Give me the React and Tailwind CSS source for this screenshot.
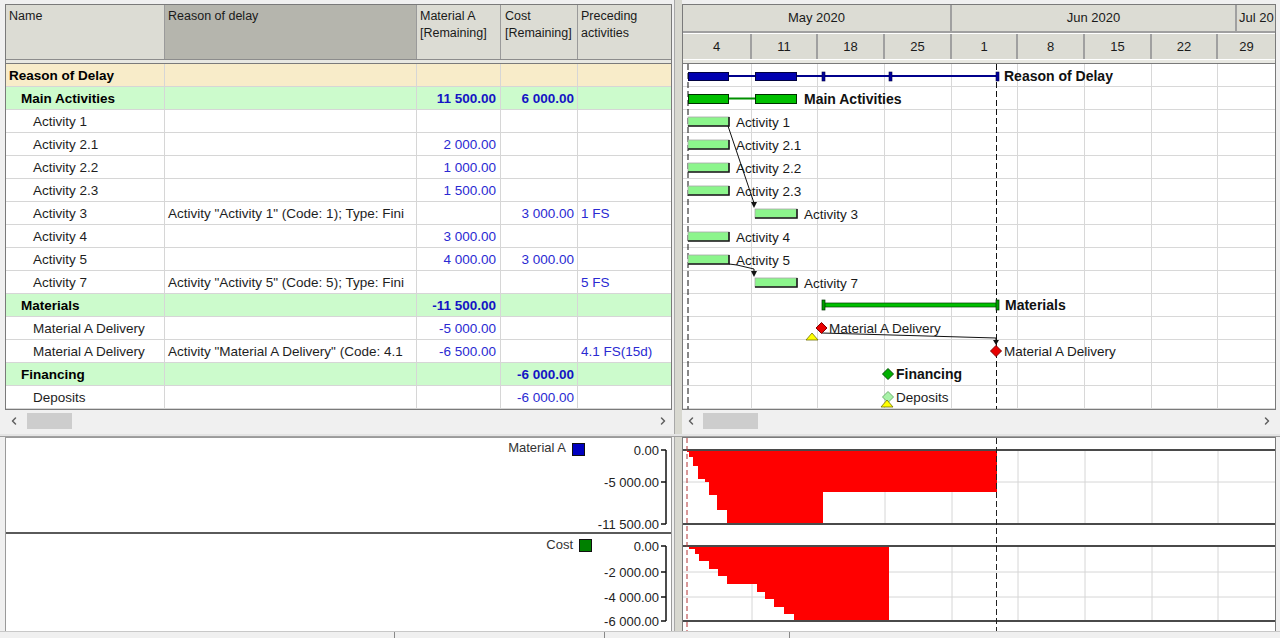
import React from 'react';
import { ChevronLeft, ChevronRight } from 'lucide-react';

const rows = [
  { name: 'Reason of Delay', kind: 'root' },
  { name: 'Main Activities', kind: 'group', mat: '11 500.00', cost: '6 000.00' },
  { name: 'Activity 1' },
  { name: 'Activity 2.1', mat: '2 000.00' },
  { name: 'Activity 2.2', mat: '1 000.00' },
  { name: 'Activity 2.3', mat: '1 500.00' },
  { name: 'Activity 3', reason: 'Activity "Activity 1" (Code: 1); Type: Fini', cost: '3 000.00', pred: '1 FS' },
  { name: 'Activity 4', mat: '3 000.00' },
  { name: 'Activity 5', mat: '4 000.00', cost: '3 000.00' },
  { name: 'Activity 7', reason: 'Activity "Activity 5" (Code: 5); Type: Fini', pred: '5 FS' },
  { name: 'Materials', kind: 'group', mat: '-11 500.00' },
  { name: 'Material A Delivery', mat: '-5 000.00' },
  { name: 'Material A Delivery', reason: 'Activity "Material A Delivery" (Code: 4.1', mat: '-6 500.00', pred: '4.1 FS(15d)' },
  { name: 'Financing', kind: 'group', cost: '-6 000.00' },
  { name: 'Deposits', cost: '-6 000.00' },
];

const days = ['4', '11', '18', '25', '1', '8', '15', '22', '29'];
const dayW = ['w-[69px]', 'w-[66px]', 'w-[67px]', 'w-[67px]', 'w-[66px]', 'w-[67px]', 'w-[67px]', 'w-[66px]', 'flex-1'];

// gantt bars, absolute page coords (svg viewBox matches)
const taskBars = [
  { x: 688, row: 2, label: 'Activity 1' },
  { x: 688, row: 3, label: 'Activity 2.1' },
  { x: 688, row: 4, label: 'Activity 2.2' },
  { x: 688, row: 5, label: 'Activity 2.3' },
  { x: 755, row: 6, label: 'Activity 3' },
  { x: 688, row: 7, label: 'Activity 4' },
  { x: 688, row: 8, label: 'Activity 5' },
  { x: 755, row: 9, label: 'Activity 7' },
];
const top = (i) => 64 + i * 23;

function Diamond({ cx, cy, fill, stroke }) {
  const r = 5.5;
  return <polygon points={`${cx},${cy - r} ${cx + r},${cy} ${cx},${cy + r} ${cx - r},${cy}`} fill={fill} stroke={stroke} strokeWidth="1" />;
}

function Scrollbar({ thumb }) {
  return (
    <div className="h-[22px] bg-[#f0f0f0] flex items-center relative">
      <ChevronLeft className="w-[12px] h-[12px] text-[#606060] ml-[3px]" strokeWidth={3} />
      <div className={thumb} />
      <ChevronRight className="w-[12px] h-[12px] text-[#606060] ml-auto mr-[3px]" strokeWidth={3} />
    </div>
  );
}

function LeftGrid() {
  return (
    <div className="w-[674px] shrink-0 pl-[5px] pr-[2px] pt-[4px] flex flex-col">
      <div className="border-l border-r border-t border-b border-[#7a7a7a] bg-white flex flex-col">
        <div className="flex h-[55px] bg-[#dcdcd4] border-b border-[#8c8c8c] text-[12.5px] leading-[17px] text-[#1a1a1a]">
          <div className="w-[159px] border-r border-[#9a9a9a] pl-[3px] pt-[3px]">Name</div>
          <div className="w-[252px] border-r border-[#9a9a9a] bg-[#b5b5ad] pl-[3px] pt-[3px]">Reason of delay</div>
          <div className="w-[84px] border-r border-[#9a9a9a] pl-[3px] pt-[3px]">Material A<br />[Remaining]</div>
          <div className="w-[77px] border-r border-[#9a9a9a] pl-[4px] pt-[3px]">Cost<br />[Remaining]</div>
          <div className="flex-1 pl-[3px] pt-[3px]">Preceding<br />activities</div>
        </div>
        <div className="h-[4px] bg-[#e8e8e2] border-b border-[#7a7a7a]" />
        {rows.map((r, i) => {
          const bg = r.kind === 'root' ? 'bg-[#f8ecc9]' : r.kind === 'group' ? 'bg-[#ccfbcc]' : 'bg-white';
          const bold = r.kind ? 'font-bold text-black' : 'text-[#1e1e1e]';
          const pad = r.kind === 'root' ? 'pl-[3px]' : r.kind === 'group' ? 'pl-[15px]' : 'pl-[27px]';
          const num = r.kind ? 'font-bold text-[#1414c4]' : 'text-[#2a2ad2]';
          return (
            <div key={i} className={`flex h-[23px] pt-[2px] border-b border-[#d6d6d6] text-[13.5px] ${bg}`}>
              <div className={`w-[159px] -mt-[2px] pt-[2px] border-r border-[#d6d6d6] flex items-center whitespace-nowrap overflow-hidden ${pad} ${bold}`}>{r.name}</div>
              <div className="w-[252px] -mt-[2px] pt-[2px] border-r border-[#d6d6d6] flex items-center pl-[3px] whitespace-nowrap overflow-hidden text-[#1e1e1e]">{r.reason}</div>
              <div className={`w-[84px] -mt-[2px] pt-[2px] border-r border-[#d6d6d6] flex items-center justify-end pr-[4px] ${num}`}>{r.mat}</div>
              <div className={`w-[77px] -mt-[2px] pt-[2px] border-r border-[#d6d6d6] flex items-center justify-end pr-[3px] ${num}`}>{r.cost}</div>
              <div className="flex-1 -mt-[2px] pt-[2px] flex items-center pl-[3px] text-[#2a2ad2] whitespace-nowrap overflow-hidden">{r.pred}</div>
            </div>
          );
        })}
      </div>
      <Scrollbar thumb="ml-[7px] w-[45px] h-[16px] bg-[#cdcdcd]" />
    </div>
  );
}

function Splitter() {
  return <div className="w-[8px] shrink-0 bg-[#d8d8d0] border-l border-[#a8a8a8]" />;
}

function GanttOverlay() {
  return (
    <svg className="absolute inset-0" width="592" height="345" viewBox="683 64 592 345">
      {/* project start / status lines */}
      <line x1="688" y1="64" x2="688" y2="409" stroke="#111" strokeDasharray="6 3" />
      <line x1="996.5" y1="64" x2="996.5" y2="409" stroke="#111" strokeDasharray="6 3" />

      {/* Reason of Delay summary */}
      <rect x="688" y="75" width="310" height="2" fill="#00008c" />
      <rect x="688.5" y="72.5" width="40" height="8" fill="#0000b0" stroke="#000040" />
      <rect x="755.5" y="72.5" width="41" height="8" fill="#0000b0" stroke="#000040" />
      <rect x="822" y="72" width="3" height="9" fill="#0000a0" stroke="#000040" strokeWidth="0.6" />
      <rect x="889" y="72" width="3" height="9" fill="#0000a0" stroke="#000040" strokeWidth="0.6" />
      <rect x="996" y="72" width="3" height="9" fill="#0000a0" stroke="#000040" strokeWidth="0.6" />
      <text x="1004" y="81" fontSize="14" fontWeight="bold" fill="#111">Reason of Delay</text>

      {/* Main Activities */}
      <rect x="729" y="97.5" width="26" height="2" fill="#009000" />
      <rect x="688.5" y="94.5" width="40" height="9" fill="#00c000" stroke="#003000" />
      <rect x="755.5" y="94.5" width="41" height="9" fill="#00c000" stroke="#003000" />
      <text x="804" y="104" fontSize="14" fontWeight="bold" fill="#111">Main Activities</text>

      {taskBars.map((b) => {
        const y = top(b.row) + 7;
        const w = b.x === 688 ? 41 : 42;
        return (
          <g key={b.row}>
            <rect x={b.x} y={y} width={w} height="9" fill="#8cf58c" stroke="#a8a8a8" strokeWidth="0.8" />
            <polyline points={`${b.x},${y + 9} ${b.x + w},${y + 9} ${b.x + w},${y}`} fill="none" stroke="#1a1a1a" strokeWidth="1.6" />
            <text x={b.x + w + 7} y={top(b.row) + 17} fontSize="13.5" fill="#1a1a1a">{b.label}</text>
          </g>
        );
      })}

      {/* dependencies */}
      <line x1="728" y1="126" x2="754" y2="203" stroke="#111" strokeWidth="1" />
      <polygon points="751,202 757,202 754,208" fill="#111" />
      <polyline points="729,264 737,265 754,269 754,272" fill="none" stroke="#111" strokeWidth="1" />
      <polygon points="751,271 757,271 754,277" fill="#111" />

      {/* Materials */}
      <rect x="823" y="303" width="175" height="4" fill="#00c000" stroke="#004000" strokeWidth="0.7" />
      <rect x="822" y="300" width="3" height="10" fill="#00a000" stroke="#003000" strokeWidth="0.7" />
      <rect x="996" y="300" width="3" height="10" fill="#00a000" stroke="#003000" strokeWidth="0.7" />
      <text x="1005" y="310" fontSize="14" fontWeight="bold" fill="#111">Materials</text>

      <polyline points="822,333 996,338 996,341" fill="none" stroke="#111" strokeWidth="1" />
      <polygon points="993,340 999,340 996,345" fill="#111" />
      <polygon points="806,340 818,340 812,333" fill="#ffff00" stroke="#707000" strokeWidth="0.8" />
      <Diamond cx={821.5} cy={328} fill="#e80000" stroke="#800000" />
      <text x="829" y="333" fontSize="13.5" fill="#1a1a1a">Material A Delivery</text>

      <Diamond cx={996} cy={351} fill="#e80000" stroke="#800000" />
      <text x="1004" y="356" fontSize="13.5" fill="#1a1a1a">Material A Delivery</text>

      <Diamond cx={888} cy={374} fill="#00b000" stroke="#005000" />
      <text x="896" y="379" fontSize="14" fontWeight="bold" fill="#111">Financing</text>

      <Diamond cx={888} cy={397} fill="#a8f2a8" stroke="#70b070" />
      <polygon points="881,407 893,407 887,400" fill="#ffff00" stroke="#707000" strokeWidth="0.8" />
      <text x="896" y="402" fontSize="13.5" fill="#1a1a1a">Deposits</text>
    </svg>
  );
}

function GanttPane() {
  return (
    <div className="flex-1 min-w-0 pr-[4px] pt-[4px] flex flex-col">
      <div className="border-l border-t border-r border-b border-[#7a7a7a] bg-white flex flex-col">
        <div className="flex h-[28px] bg-[#dcdcd4] border-b-2 border-[#a0a0a0] text-[13px] text-[#1a1a1a]">
          <div className="w-[269px] border-r-2 border-[#a0a0a0] flex items-center justify-center">May 2020</div>
          <div className="w-[285px] border-r-2 border-[#a0a0a0] flex items-center justify-center">Jun 2020</div>
          <div className="flex-1 flex items-center pl-[2px] whitespace-nowrap overflow-hidden">Jul 20</div>
        </div>
        <div className="flex h-[27px] bg-[#dcdcd4] border-t border-white border-b border-[#8c8c8c] text-[13px] text-[#1a1a1a]">
          {days.map((d, i) => (
            <div key={i} className={`${dayW[i]} ${i < 8 ? 'border-r-2 border-[#a0a0a0]' : ''} flex items-center justify-center`}>{d}</div>
          ))}
        </div>
        <div className="h-[4px] bg-[#e8e8e2] border-b border-[#7a7a7a]" />
        <div className="relative">
          {rows.map((r, i) => (
            <div key={i} className="flex h-[23px] border-b border-[#d8d8d8]">
              {dayW.map((w, j) => (
                <div key={j} className={`${w} ${j < 8 ? 'border-r border-[#d8d8d8]' : ''}`} />
              ))}
            </div>
          ))}
          <GanttOverlay />
        </div>
      </div>
      <Scrollbar thumb="ml-[6px] w-[55px] h-[16px] bg-[#cdcdcd]" />
    </div>
  );
}

function LeftChart() {
  return (
    <div className="w-[674px] shrink-0 pl-[5px] pr-[2px] flex flex-col">
      <div className="flex-1 bg-white border-l border-r border-t border-[#9a9a9a] flex flex-col">
        <div className="h-[96px] border-b-2 border-[#5a5a5a]">
          <svg width="665" height="94" viewBox="6 438 665 94">
            <text x="566" y="452" fontSize="13" textAnchor="end" fill="#333">Material A</text>
            <rect x="572.5" y="443.5" width="12" height="12" fill="#0000c0" stroke="#111" />
            <line x1="666" y1="450" x2="666" y2="524" stroke="#111" strokeWidth="1.5" />
            {[[450, '0.00'], [482, '-5 000.00'], [524, '-11 500.00']].map(([y, t]) => (
              <g key={t}>
                <line x1="661" y1={y} x2="666" y2={y} stroke="#111" strokeWidth="1.5" />
                <text x="659" y={y + 4.5} fontSize="13" textAnchor="end" fill="#222">{t}</text>
              </g>
            ))}
          </svg>
        </div>
        <div className="flex-1">
          <svg width="665" height="96" viewBox="6 534 665 96">
            <text x="573" y="549" fontSize="13" textAnchor="end" fill="#333">Cost</text>
            <rect x="579.5" y="539.5" width="12" height="12" fill="#008000" stroke="#111" />
            <line x1="666" y1="546" x2="666" y2="621" stroke="#111" strokeWidth="1.5" />
            {[[546, '0.00'], [572, '-2 000.00'], [597, '-4 000.00'], [621, '-6 000.00']].map(([y, t]) => (
              <g key={t}>
                <line x1="661" y1={y} x2="666" y2={y} stroke="#111" strokeWidth="1.5" />
                <text x="659" y={y + 4.5} fontSize="13" textAnchor="end" fill="#222">{t}</text>
              </g>
            ))}
          </svg>
        </div>
      </div>
    </div>
  );
}

const weekLines = [752, 818, 885, 952, 1018, 1085, 1152, 1218];
const area1 = '687,450 997,450 997,492 823,492 823,524 727,524 727,510 717,510 717,495 709,495 709,482 705,482 705,479 698,479 698,466 693,466 693,457 689,457 689,452 687,452';
const area2 = '687,546 889,546 889,621 794,621 794,614 784,614 784,607 774,607 774,599 765,599 765,592 757,592 757,584 727,584 727,576 718,576 718,569 709,569 709,561 699,561 699,554 695,554 695,549 689,549 689,547 687,547';

function RightChart() {
  return (
    <div className="flex-1 min-w-0 pr-[4px] flex flex-col">
      <div className="flex-1 bg-white border-l border-r border-t border-[#7a7a7a]">
        <svg width="592" height="193" viewBox="683 438 592 193">
          {weekLines.map((x) => (
            <g key={x} stroke="#d6d6d6">
              <line x1={x} y1="450" x2={x} y2="524" />
              <line x1={x} y1="546" x2={x} y2="621" />
            </g>
          ))}
          {[482, 572, 597].map((y) => (
            <line key={y} x1="683" y1={y} x2="1275" y2={y} stroke="#d6d6d6" />
          ))}
          <polygon points={area1} fill="#ff0000" />
          <polygon points={area2} fill="#ff0000" />
          {[450, 524, 546, 621].map((y) => (
            <line key={y} x1="683" y1={y} x2="1275" y2={y} stroke="#4a4a4a" strokeWidth="2" />
          ))}
          <line x1="687" y1="438" x2="687" y2="631" stroke="#b03030" strokeDasharray="5 3" />
          <line x1="996.5" y1="438" x2="996.5" y2="631" stroke="#222" strokeDasharray="6 3" />
        </svg>
      </div>
    </div>
  );
}

export default function App() {
  return (
    <div className="w-[1280px] h-[638px] overflow-hidden bg-[#f0f0f0] flex flex-col font-[Liberation_Sans,Arial,sans-serif] text-[#111]">
      <div className="flex h-[434px]">
        <LeftGrid />
        <Splitter />
        <GanttPane />
      </div>
      <div className="h-[3px] bg-[#e4e4e4] border-b border-[#a0a0a0]" />
      <div className="flex h-[194px]">
        <LeftChart />
        <Splitter />
        <RightChart />
      </div>
      <div className="h-[7px] flex bg-[#f0f0f0] border-t border-[#c8c8c8]">
        <div className="w-[395px] border-r border-[#888]" />
        <div className="w-[210px] border-r border-[#888]" />
        <div className="w-[185px] border-r border-[#888]" />
        <div className="flex-1" />
      </div>
    </div>
  );
}
